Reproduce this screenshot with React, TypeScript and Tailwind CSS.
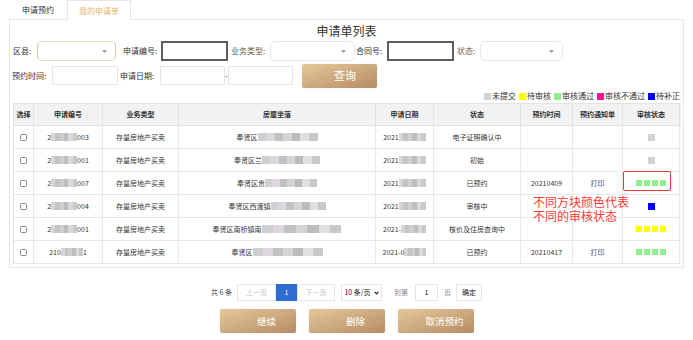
import React from "react";

const FONT = "font-['Noto_Sans_CJK_SC','Noto_Sans',sans-serif]";

type Row = {
  pre: string;
  post: string;
  addr: string;
  addrW: number;
  date: string;
  dateW: number;
  status: string;
  time: string;
  print: boolean;
  sq: { color: string; n: number };
  boxed?: boolean;
};

const rows: Row[] = [
  { pre: "2", post: "003", addr: "奉贤区", addrW: 60, date: "2021", dateW: 27, status: "电子证照确认中", time: "", print: false, sq: { color: "#d3d3d3", n: 1 } },
  { pre: "2", post: "001", addr: "奉贤区兰", addrW: 58, date: "2021", dateW: 27, status: "初始", time: "", print: false, sq: { color: "#d3d3d3", n: 1 } },
  { pre: "2", post: "007", addr: "奉贤区贵", addrW: 52, date: "2021", dateW: 27, status: "已预约", time: "20210409", print: true, sq: { color: "#90ee90", n: 4 }, boxed: true },
  { pre: "2", post: "004", addr: "奉贤区西渡镇", addrW: 55, date: "2021", dateW: 27, status: "审核中", time: "", print: false, sq: { color: "#0000ff", n: 1 } },
  { pre: "2", post: "001", addr: "奉贤区南桥镇南", addrW: 80, date: "2021-", dateW: 25, status: "核价及住房查询中", time: "", print: false, sq: { color: "#ffff00", n: 4 } },
  { pre: "210", post: "1", addr: "奉贤区", addrW: 70, date: "2021-0", dateW: 22, status: "已预约", time: "20210417", print: true, sq: { color: "#90ee90", n: 4 } },
];

const mosaicPalettes = [
  ["#d6d6d6", "#c4c4c4", "#cfcfcf", "#bdbdbd", "#d9d9d9", "#c9c9c9"],
  ["#cfcfcf", "#dcd6de", "#c2c2c2", "#d4d4d4", "#bcbcbc", "#e0e0e0", "#c8c8c8"],
];

function Mosaic({ w, p = 0 }: { w: number; p?: number }) {
  const colors = mosaicPalettes[p];
  return (
    <span className="inline-flex h-[8px] blur-[0.6px] align-middle" style={{ width: w }}>
      {colors.map((c, i) => (
        <span key={i} className="flex-1 h-full" style={{ background: c }} />
      ))}
    </span>
  );
}

function Caret() {
  return (
    <svg width="5" height="3" viewBox="0 0 5 3" className="shrink-0">
      <path d="M0 0 L5 0 L2.5 3 Z" fill="#999" />
    </svg>
  );
}

function Select({ w, gold }: { w: string; gold?: boolean }) {
  return (
    <div
      className={`${w} h-[20px] bg-white rounded-[5px] border flex items-center justify-end pr-[8px] ${
        gold ? "border-[#e6dbc7] border-l-[#d9c7a2] border-r-[#d9c7a2] pr-[3px]" : "border-[#e8e8e8]"
      }`}
    >
      <Caret />
    </div>
  );
}

function Btn({ children, cls }: { children: React.ReactNode; cls: string }) {
  return (
    <div
      className={`${cls} bg-gradient-to-br from-[#e4c998] to-[#b68c66] text-white flex items-center justify-center rounded-[2px] shadow-[0_0_1px_rgba(0,0,0,0.25)]`}
    >
      {children}
    </div>
  );
}

const GRID = "grid grid-cols-[20px_69px_76px_197px_58px_87px_52px_50px_57px]";

export default function App() {
  return (
    <div className={`w-[693px] h-[340px] bg-white relative overflow-hidden text-[#333] ${FONT}`}>
      {/* tabs */}
      <div className="flex h-[20px] pl-[9px] relative z-10">
        <div className="w-[58px] h-[19px] flex items-center justify-center text-[8px] text-[#333]">申请预约</div>
        <div className="w-[64px] h-[20px] border border-b-0 border-[#e6e6e6] bg-white flex items-center justify-center text-[8px] text-[#e2b66e]">
          我的申请单
        </div>
      </div>

      {/* panel */}
      <div className="ml-[9px] -mt-px w-[675px] h-[249px] border border-[#e6e6e6]">
        <div className="h-[21px] flex items-center justify-center text-[12px] text-[#333] leading-none">申请单列表</div>

        {/* filters row 1 */}
        <div className="flex items-center h-[20px] pl-[3px] text-[8px]">
          <span className="w-[24px]">区县:</span>
          <Select w="w-[79px]" gold />
          <span className="ml-[7px] w-[38px]">申请编号:</span>
          <div className="w-[67px] h-[20px] border-2 border-[#5e5e5e] bg-white" />
          <span className="ml-[3px] w-[39px] text-[#6b5a3e]">业务类型:</span>
          <Select w="w-[85px]" />
          <span className="ml-[1px] w-[31px]">合同号:</span>
          <div className="w-[67px] h-[20px] border-2 border-[#5e5e5e] bg-white" />
          <span className="ml-[3px] w-[23px] text-[#7a6443]">状态:</span>
          <Select w="w-[83px]" />
        </div>

        {/* filters row 2 */}
        <div className="flex items-center h-[25px] mt-[2px] pl-[2px] text-[8px]">
          <span className="w-[40px]">预约时间:</span>
          <div className="w-[66px] h-[19px] border border-[#e6e6e6]" />
          <span className="ml-[2px] w-[40px]">申请日期:</span>
          <div className="w-[65px] h-[19px] border border-[#e6e6e6]" />
          <span className="w-[3px] text-center">-</span>
          <div className="w-[65px] h-[19px] border border-[#e6e6e6]" />
          <Btn cls="ml-[9px] w-[75px] h-[24px] text-[11px] pl-[11px]">查询</Btn>
        </div>

        {/* legend */}
        <div className="mt-[1px] h-[14px] flex items-center justify-end pr-[3px] text-[8px] text-[#333] gap-[3px]">
          {[
            ["#d3d3d3", "未提交"],
            ["#ffff00", "待审核"],
            ["#90ee90", "审核通过"],
            ["#ff1493", "审核不通过"],
            ["#0000ff", "待补正"],
          ].map(([c, t]) => (
            <span key={t} className="flex items-center gap-[1px]">
              <span className="w-[7px] h-[7px]" style={{ background: c }} />
              <span>{t}</span>
            </span>
          ))}
        </div>

        {/* table */}
        <div className="ml-[3px] w-[668px] border-l border-t border-[#e3e3e3] text-[7px] relative">
          <div className={`${GRID} h-[22px] bg-[#f2f2f2] font-bold text-[#333]`}>
            {["选择", "申请编号", "业务类型", "房屋坐落", "申请日期", "状态", "预约时间", "预约通知单", "审核状态"].map((h) => (
              <div key={h} className="border-r border-b border-[#e3e3e3] flex items-center justify-center">
                {h}
              </div>
            ))}
          </div>
          {rows.map((r, i) => (
            <div key={i} className={`${GRID} h-[23px] text-[#333]`}>
              <div className="border-r border-b border-[#e8e8e8] flex items-center justify-center">
                <span className="w-[7px] h-[7px] border border-[#8a8a8a] rounded-[1.5px] bg-white" />
              </div>
              <div className="border-r border-b border-[#e8e8e8] flex items-center justify-center">
                <span>{r.pre}</span>
                <Mosaic w={r.pre.length > 1 ? 22 : 26} />
                <span>{r.post}</span>
              </div>
              <div className="border-r border-b border-[#e8e8e8] flex items-center justify-center">存量房地产买卖</div>
              <div className="border-r border-b border-[#e8e8e8] flex items-center justify-center">
                <span>{r.addr}</span>
                <Mosaic w={r.addrW} p={1} />
              </div>
              <div className="border-r border-b border-[#e8e8e8] flex items-center justify-center">
                <span>{r.date}</span>
                <Mosaic w={r.dateW} />
              </div>
              <div className="border-r border-b border-[#e8e8e8] flex items-center justify-center">{r.status}</div>
              <div className="border-r border-b border-[#e8e8e8] flex items-center justify-center">{r.time}</div>
              <div className="border-r border-b border-[#e8e8e8] flex items-center justify-center text-[#3f4d85]">
                {r.print ? "打印" : ""}
              </div>
              <div className="border-r border-b border-[#e8e8e8] flex items-center justify-center gap-[2px] relative">
                {Array.from({ length: r.sq.n }).map((_, k) => (
                  <span
                    key={k}
                    className={r.sq.n > 1 ? "w-[6px] h-[6px]" : "w-[7px] h-[7px]"}
                    style={{ background: r.sq.color }}
                  />
                ))}
                {r.boxed && (
                  <span className="absolute left-0 top-[-1px] w-[48px] h-[20px] border-[1.5px] border-[#e53935] rounded-[2px]" />
                )}
              </div>
            </div>
          ))}

          {/* annotation */}
          <div className="absolute left-[519px] top-[91px] text-[12px] leading-[14px] text-[#ff3b30] whitespace-nowrap">
            <div>不同方块颜色代表</div>
            <div>不同的审核状态</div>
          </div>
        </div>
      </div>

      {/* pagination */}
      <div className="mt-[16px] h-[17px] flex items-center justify-center text-[7px]">
        <span className="text-[#444]">共 6 条</span>
        <div className="ml-[5px] w-[39px] h-[17px] border border-[#e6e6e6] flex items-center justify-center text-[#c4c4c4]">上一页</div>
        <div className="w-[21px] h-[17px] bg-[#2f6bd1] text-white flex items-center justify-center">1</div>
        <div className="w-[38px] h-[17px] border border-[#e6e6e6] flex items-center justify-center text-[#c4c4c4]">下一页</div>
        <div className="ml-[6px] w-[41px] h-[17px] border border-[#e6e6e6] flex items-center justify-center gap-[3px] text-[#222]">
          <span>10 条/页</span>
          <svg width="5" height="4" viewBox="0 0 5 4">
            <path d="M0.6 0.8 L2.5 2.8 L4.4 0.8" stroke="#222" strokeWidth="1.2" fill="none" />
          </svg>
        </div>
        <span className="ml-[12px] text-[#888]">到第</span>
        <div className="ml-[7px] w-[23px] h-[17px] border border-[#e6e6e6] flex items-center justify-center text-[#222]">1</div>
        <span className="ml-[6px] text-[#888]">页</span>
        <div className="ml-[5px] w-[26px] h-[17px] border border-[#e6e6e6] flex items-center justify-center text-[#222]">确定</div>
      </div>

      {/* action buttons */}
      <div className="mt-[8px] flex justify-center gap-[13px] text-[9.5px]">
        <Btn cls="w-[76px] h-[24px] pl-[18px]">继续</Btn>
        <Btn cls="w-[76px] h-[24px] pl-[18px]">删除</Btn>
        <Btn cls="w-[76px] h-[24px] pl-[18px]">取消预约</Btn>
      </div>
    </div>
  );
}
